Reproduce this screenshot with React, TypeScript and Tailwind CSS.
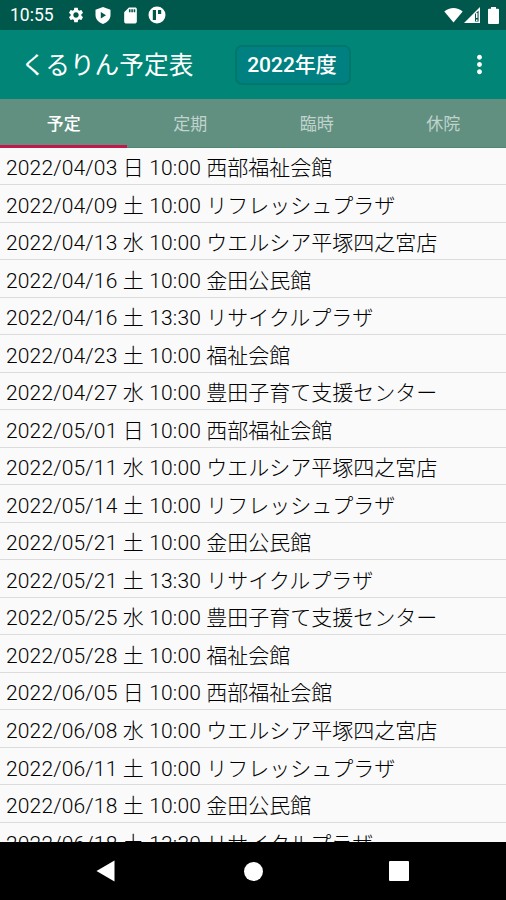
import {
  MdSettings,
  MdSdCard,
  MdMoreVert,
} from 'react-icons/md'

interface Entry {
  date: string
  day: string
  time: string
  place: string
}

const TABS = ['予定', '定期', '臨時', '休院']

const ENTRIES: Entry[] = [
  { date: '2022/04/03', day: '日', time: '10:00', place: '西部福祉会館' },
  { date: '2022/04/09', day: '土', time: '10:00', place: 'リフレッシュプラザ' },
  { date: '2022/04/13', day: '水', time: '10:00', place: 'ウエルシア平塚四之宮店' },
  { date: '2022/04/16', day: '土', time: '10:00', place: '金田公民館' },
  { date: '2022/04/16', day: '土', time: '13:30', place: 'リサイクルプラザ' },
  { date: '2022/04/23', day: '土', time: '10:00', place: '福祉会館' },
  { date: '2022/04/27', day: '水', time: '10:00', place: '豊田子育て支援センター' },
  { date: '2022/05/01', day: '日', time: '10:00', place: '西部福祉会館' },
  { date: '2022/05/11', day: '水', time: '10:00', place: 'ウエルシア平塚四之宮店' },
  { date: '2022/05/14', day: '土', time: '10:00', place: 'リフレッシュプラザ' },
  { date: '2022/05/21', day: '土', time: '10:00', place: '金田公民館' },
  { date: '2022/05/21', day: '土', time: '13:30', place: 'リサイクルプラザ' },
  { date: '2022/05/25', day: '水', time: '10:00', place: '豊田子育て支援センター' },
  { date: '2022/05/28', day: '土', time: '10:00', place: '福祉会館' },
  { date: '2022/06/05', day: '日', time: '10:00', place: '西部福祉会館' },
  { date: '2022/06/08', day: '水', time: '10:00', place: 'ウエルシア平塚四之宮店' },
  { date: '2022/06/11', day: '土', time: '10:00', place: 'リフレッシュプラザ' },
  { date: '2022/06/18', day: '土', time: '10:00', place: '金田公民館' },
  { date: '2022/06/18', day: '土', time: '13:30', place: 'リサイクルプラザ' },
]

function StatusBar() {
  return (
    <div className="h-[30px] flex-shrink-0 flex items-center justify-between bg-[#00574b] pl-[10px] pr-[7px] text-white">
      <div className="flex items-center">
        <span className="w-[57px] text-[17.500px] leading-none pt-[2px]">10:55</span>
        <MdSettings className="w-[18px] h-[18px]" />
        <svg viewBox="0 0 16 17" className="w-4 h-[17px] ml-[10px]" fill="currentColor">
          <path
            fillRule="evenodd"
            d="M8 0 15.5 2.8V8c0 4.200-3 7.500-7.500 9C3.500 15.500.5 12.200.5 8V2.800ZM5.800 5v6.600l5.200-3.300Z"
          />
        </svg>
        <MdSdCard className="w-[19px] h-[19px] ml-[10px]" />
        <svg viewBox="0 0 18 18" className="w-[18px] h-[18px] ml-[8px]" fill="currentColor">
          <path
            fillRule="evenodd"
            d="M9 .5a8.500 8.500 0 1 1 0 17 8.500 8.500 0 0 1 0-17ZM4.800 4v10h3.200V4ZM10 4v4h3.200V4Z"
          />
        </svg>
      </div>
      <div className="flex items-center">
        <svg viewBox="0 0 19 16" className="w-[19px] h-4" fill="currentColor">
          <path d="M.3 4.500C5.500-.3 13.500-.3 18.700 4.500L9.500 15.500Z" />
        </svg>
        <svg viewBox="0 0 16 16" className="w-4 h-4 ml-px" fill="currentColor">
          <path fillRule="evenodd" d="M0 16 16 0v16ZM11 7v7.500h3.600V3.500Z" />
          <path d="M12 6h1.500v5H12ZM12 12.500h1.500V14H12Z" />
        </svg>
        <svg viewBox="0 0 11 17" className="w-[11px] h-[17px] ml-2" fill="currentColor">
          <path d="M3 0h5v1.800h2q1 0 1 1V16q0 1-1 1H1q-1 0-1-1V2.800q0-1 1-1h2Z" />
        </svg>
      </div>
    </div>
  )
}

function Toolbar() {
  return (
    <header className="h-[69px] flex-shrink-0 flex items-center bg-[#008577] text-white">
      <h1 className="w-[235px] pl-[21px] pt-[4px] text-[24.700px] leading-none whitespace-nowrap">くるりん予定表</h1>
      <button className="w-[116px] h-10 flex items-center justify-center rounded-[7px] border-2 border-[#00776c] bg-[#008080] pt-[2px] pr-[2px] text-[21px] leading-none font-medium whitespace-nowrap">
        2022年度
      </button>
      <button className="ml-auto mr-[12px]" aria-label="メニュー">
        <MdMoreVert className="w-[29px] h-[29px]" />
      </button>
    </header>
  )
}

function Tabs() {
  return (
    <nav className="h-[49px] flex-shrink-0 grid grid-cols-4 bg-[#619080] border-b border-[#4f8674]">
      {TABS.map((tab, i) => (
        <button
          key={tab}
          className={`-mb-px flex items-center justify-center border-b-[3px] pt-[5px] pl-px text-[17px] leading-none ${
            i === 0 ? 'border-[#c2184b] text-white font-medium' : 'border-transparent text-[#c0d3cc]'
          }`}
        >
          {tab}
        </button>
      ))}
    </nav>
  )
}

function NavBar() {
  return (
    <div className="z-10 h-[58px] flex-shrink-0 flex items-center bg-black pl-[96px] text-white">
      <svg viewBox="0 0 19 22" className="w-[19px] h-[22px]" fill="currentColor">
        <path d="M.5 11 18.500.5v21Z" />
      </svg>
      <div className="w-[19px] h-[19px] ml-[129px] rounded-full bg-white" />
      <div className="w-[20px] h-[20px] ml-[126px] rounded-[1px] bg-white" />
    </div>
  )
}

export default function App() {
  return (
    <div className="w-[506px] h-[900px] flex flex-col overflow-hidden bg-[#fafafa] font-[Roboto,'Noto_Sans_CJK_JP',sans-serif]">
      <StatusBar />
      <Toolbar />
      <Tabs />
      <ul className="-mt-[0.5px] flex-1 min-h-0 overflow-hidden text-[21px] font-light text-black">
        {ENTRIES.map((e, i) => (
          <li
            key={i}
            className="h-[37.530px] flex items-center border-b border-[#dcdcdc] pl-[6px] pt-[6px] leading-none whitespace-nowrap"
          >
            <p className="tracking-[0.16px]">
              {e.date} {e.day} {e.time} <span className="tracking-normal">{e.place}</span>
            </p>
          </li>
        ))}
      </ul>
      <NavBar />
    </div>
  )
}
